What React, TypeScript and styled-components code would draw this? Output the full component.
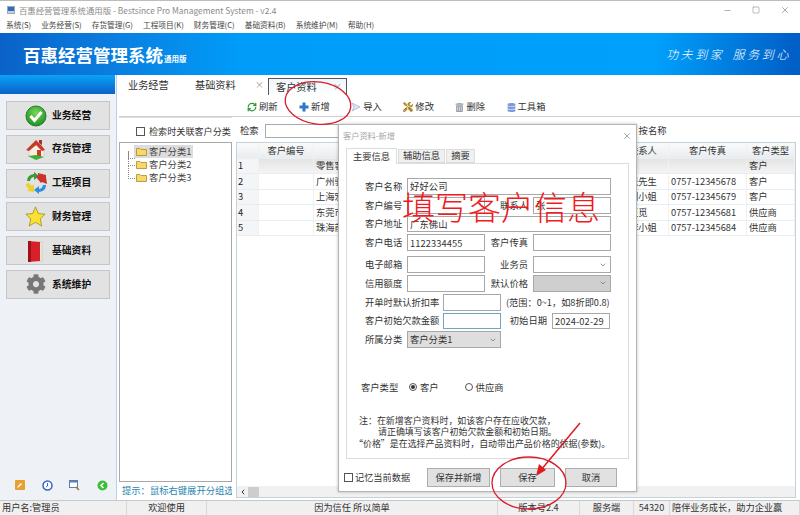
import React from "react";
import styled, { createGlobalStyle } from "styled-components";
import { ChevronDown, Minus, Square, X, ChevronLeft, RefreshCw } from "lucide-react";
import { FaCog, FaTrashAlt, FaDatabase, FaTools } from "react-icons/fa";

const Global = createGlobalStyle`
  html, body { margin: 0; padding: 0; background: #fff; }
  * { box-sizing: border-box; }
  body { font-family: "Noto Sans CJK SC", "Noto Sans", sans-serif; font-size: 9.3px; color: #333; line-height: 1.2; }
`;

const Win = styled.div`
  position: relative; width: 800px; height: 515px; overflow: hidden; background: #fff;
  border-top: 1px solid #bcbcbc; display: flex; flex-direction: column;
`;
const TitleBar = styled.div`
  height: 16px; flex: none; display: flex; align-items: center; padding: 2px 0 0 7px; gap: 4px;
  color: #8a8a8a; font-size: 8.4px;
`;
const AppIcon = styled.span`
  width: 8px; height: 8px; flex: none; background: linear-gradient(#2f6db5 65%, #ccd 65%); border: 1px solid #9ab;
`;
const WinControls = styled.div`
  margin-left: auto; display: flex; gap: 20px; padding-right: 10px; color: #9a9a9a; align-items: center;
`;
const MenuBar = styled.div`
  height: 16px; flex: none; display: flex; align-items: center; padding-left: 6px; gap: 10px; font-size: 7.7px; color: #444;
`;
const Header = styled.header`
  height: 42px; flex: none; display: flex; align-items: center; justify-content: space-between;
  padding: 1px 9px 0 23px;
  background: linear-gradient(90deg, #0a62c8 0%, #0a7ee0 14%, #009cf8 30%, #00a0fb 82%, #0060c8 99%);
  color: #fff;
`;
const Logo = styled.div`
  font-size: 17.5px; font-weight: 700; display: flex; align-items: flex-end; line-height: 1;
`;
const LogoSub = styled.span`
  font-size: 7.5px; font-weight: 700; margin: 0 0 1px 1px;
`;
const Slogan = styled.div`
  font-size: 12px; font-style: italic; font-weight: 300; letter-spacing: 2.6px; word-spacing: 3px;
`;
const Body = styled.div`
  flex: 1; min-height: 0; display: flex;
`;
const Sidebar = styled.aside`
  width: 117px; flex: none; display: flex; flex-direction: column; background: #eef2f6;
  border-right: 1px solid #b8d0e8;
`;
const SideTop = styled.div`
  height: 19px; flex: none; background: linear-gradient(#0aa2f8, #0a62c8); margin-right: 1px;
`;
const SideList = styled.nav`
  display: flex; flex-direction: column; gap: 4.8px; padding: 7px 6px 0; flex: 1;
`;
const SideButton = styled.div`
  height: 29px; background: #e2e2e2; border: 1px solid #c6c6c6; display: flex; align-items: center;
  color: #111; font-weight: 700; font-size: 9.8px; gap: 0;
`;
const SideIcon = styled.span`
  width: 45px; flex: none; display: flex; justify-content: center; padding-left: 12px;
`;
const SideTools = styled.div`
  height: 20px; flex: none; display: flex; align-items: flex-start; gap: 16.5px; padding: 0 0 0 15px;
`;
const Main = styled.main`
  flex: 1; min-width: 0; display: flex; flex-direction: column;
`;
const TabBar = styled.div`
  height: 20px; flex: none; display: flex; align-items: flex-end; font-size: 10.2px; padding-left: 11px;
  color: #333;
`;
const PageTab = styled.div<{ $active?: boolean; $w: number }>`
  width: ${(p) => p.$w}px; height: ${(p) => (p.$active ? "17px" : "19px")}; display: flex; align-items: center;
  padding-left: ${(p) => (p.$active ? "7px" : "0")}; justify-content: space-between;
  border: ${(p) => (p.$active ? "1px solid #555" : "none")}; border-bottom: none;
  background: ${(p) => (p.$active ? "linear-gradient(#eef6fc, #fff)" : "transparent")};
`;
const TabClose = styled.span`
  color: #999; font-size: 9px; margin-right: 4px;
`;
const Toolbar = styled.div`
  height: 22px; flex: none; display: flex; align-items: center; padding: 3px 0 0 128px; gap: 21.5px;
  border-bottom: 1px solid #cfcfcf; margin-left: 2px;
`;
const ToolItem = styled.div`
  display: flex; align-items: center; gap: 2px; color: #333; font-size: 9.3px;
`;
const Content = styled.div`
  flex: 1; min-height: 0; display: flex; gap: 4px; padding-left: 2px;
`;
const LeftCol = styled.div`
  width: 113px; flex: none; display: flex; flex-direction: column;
`;
const CheckRow = styled.label`
  height: 25px; flex: none; display: flex; align-items: center; gap: 4px; padding: 2px 0 0 17px; white-space: nowrap;
  border-top: 1px solid #ddd; font-size: 9.1px;
`;
const Check = styled.span`
  width: 9px; height: 9px; flex: none; border: 1px solid #555; background: #fff;
`;
const TreePanel = styled.div`
  flex: 1; border: 1px solid #a8a8a8; padding: 2px 0 0 8px;
`;
const TreeItem = styled.div<{ $sel?: boolean; $last?: boolean }>`
  position: relative; height: 13px; display: flex; align-items: center; gap: 2px; margin-left: 6px; width: 59px; padding-left: 2px;
  background: ${(p) => (p.$sel ? "#dcdcdc" : "transparent")}; color: #444;
  &::before {
    content: ""; position: absolute; left: -6px; top: ${(p) => (p.$sel ? "6px" : "-6px")}; width: 6px;
    height: ${(p) => (p.$sel ? "7px" : "13px")}; border-left: 1px dotted #888; border-bottom: 1px dotted #888;
  }
`;
const Hint = styled.div`
  height: 18px; flex: none; display: flex; align-items: center; padding-left: 3px; color: #2a86b0; font-size: 9.3px;
  white-space: nowrap; overflow: hidden;
`;
const RightCol = styled.div`
  flex: 1; min-width: 0; display: flex; flex-direction: column;
`;
const SearchRow = styled.div`
  height: 25px; flex: none; display: flex; align-items: center; padding: 2px 0 0 4px; font-size: 9.3px; color: #333;
`;
const SearchInput = styled.input`
  width: 140px; height: 14px; margin-left: 6px; border: 1px solid #aaa; background: #fff; padding: 0;
`;
const SearchRadio = styled.span`
  margin-left: 234px;
`;
const GridPanel = styled.div`
  flex: 1; min-height: 0; width: 560px; margin-bottom: 2px; border: 1px solid #c4d2dc;
  display: flex; flex-direction: column; background: #fff;
`;
const GridBody = styled.div`
  flex: 1; min-height: 0;
`;
const GridRow = styled.div<{ $head?: boolean; $sel?: boolean }>`
  display: grid; grid-template-columns: 22px 55px 315px 40px 78px 48px;
  height: ${(p) => (p.$head ? "15.5px" : "15.5px")}; align-items: center;
  background: ${(p) => (p.$head ? "linear-gradient(#fafafa,#e9edf0)" : p.$sel ? "linear-gradient(#e4e4e4,#f4f4f4)" : "#fff")};
  border-bottom: 1px solid #e9eef0;
`;
const Cell = styled.div<{ $center?: boolean; $pad?: number }>`
  height: 100%; display: flex; align-items: center; white-space: nowrap; overflow: hidden;
  justify-content: ${(p) => (p.$center ? "center" : "flex-start")};
  padding-left: ${(p) => p.$pad ?? 0}px; border-right: 1px solid #eef1f3; color: #333;
`;
const RowHead = styled(Cell)`
  background: #f4f5f6; padding-left: 1px; color: #222;
`;
const ScrollTrack = styled.div`
  height: 11px; flex: none; display: flex; align-items: center; background: #f1f1f1; padding-left: 2px; color: #333;
`;
const ScrollThumb = styled.span`
  width: 11px; height: 10px; background: #cdcdcd; margin-left: 1px;
`;
const StatusBar = styled.footer`
  height: 15px; flex: none; display: flex; background: #f0f0f0; border-top: 1px solid #c8c8c8; color: #333; font-size: 9.2px;
`;
const StatusCell = styled.div<{ $w: number; $left?: boolean }>`
  width: ${(p) => p.$w}px; flex: none; display: flex; align-items: center; white-space: nowrap; overflow: hidden;
  justify-content: ${(p) => (p.$left ? "flex-start" : "center")}; padding-left: ${(p) => (p.$left ? "2px" : "0")};
  border-right: 1px solid #d8d8d8;
`;

/* dialog lies over the page */
const Dialog = styled.section`
  position: absolute; left: 338px; top: 123px; width: 299px; height: 368px; background: #fff;
  border: 1px solid #b4b4b4; box-shadow: 0 0 3px rgba(0,0,0,.25); display: flex; flex-direction: column; padding: 0 7px;
`;
const DialogTitle = styled.div`
  height: 22px; flex: none; margin: 0 -5px; padding: 0 2px; display: flex; align-items: center; justify-content: space-between;
  color: #a8a8a8; font-size: 8.2px;
`;
const DialogTabs = styled.div`
  height: 16px; flex: none; display: flex; gap: 1px; align-items: flex-end; font-size: 9.3px; color: #333; position: relative; z-index: 1;
`;
const DialogTab = styled.div<{ $active?: boolean; $w: number }>`
  width: ${(p) => p.$w}px; height: ${(p) => (p.$active ? "16px" : "14px")}; display: flex; align-items: center; justify-content: center;
  background: ${(p) => (p.$active ? "#fff" : "#f0f0f0")}; border: 1px solid #dcdcdc;
  border-bottom: ${(p) => (p.$active ? "none" : "1px solid #dcdcdc")};
  margin-bottom: ${(p) => (p.$active ? "-1px" : "0")};
`;
const TabBody = styled.div`
  height: 296px; flex: none; border: 1px solid #dcdcdc; padding: 14px 0 0 18px; display: flex; flex-direction: column; gap: 2px;
`;
const FormRow = styled.div<{ $mt?: number }>`
  height: 16.8px; flex: none; display: flex; align-items: center; margin-top: ${(p) => p.$mt ?? 0}px;
`;
const FieldLabel = styled.label<{ $w: number; $right?: boolean }>`
  width: ${(p) => p.$w}px; flex: none; white-space: nowrap; text-align: ${(p) => (p.$right ? "right" : "left")}; color: #333;
`;
const Field = styled.input<{ $w: number; $focus?: boolean; $ml?: number }>`
  width: ${(p) => p.$w}px; height: 100%; flex: none; padding: 0 0 0 2px; margin-left: ${(p) => p.$ml ?? 5}px;
  border: 1px solid ${(p) => (p.$focus ? "#6fa6c8" : "#a8a8a8")}; background: #fff; outline: none;
  font: inherit; color: #333; letter-spacing: .1px;
`;
const SelectBox = styled.div<{ $w: number; $bg?: string; $ml?: number }>`
  width: ${(p) => p.$w}px; height: 100%; flex: none; display: flex; align-items: center; justify-content: space-between;
  padding: 0 3px 0 2px; margin-left: ${(p) => p.$ml ?? 5}px; border: 1px solid #a8a8a8; background: ${(p) => p.$bg ?? "#fff"}; color: #333;
`;
const RangeNote = styled.span`
  margin-left: 5px; white-space: nowrap; font-size: 9.2px;
`;
const TypeRow = styled.div`
  margin-top: 30px; height: 14px; display: flex; align-items: center; margin-left: -4px; flex: none;
`;
const Radio = styled.span<{ $on?: boolean }>`
  width: 8px; height: 8px; flex: none; border-radius: 50%; border: 1px solid #555; background: #fff; position: relative;
  margin-right: 3px; margin-left: 10px;
  &::after { content: ""; display: ${(p) => (p.$on ? "block" : "none")}; position: absolute; inset: 1px; background: #333; border-radius: 50%; }
`;
const RadioGap = styled.span`
  width: 16px;
`;
const Notes = styled.div`
  margin: 19px 0 0 -11px; font-size: 8.95px; line-height: 11.2px; white-space: nowrap; color: #333;
`;
const NoteLine = styled.div<{ $ind: number }>`
  padding-left: ${(p) => p.$ind}px;
`;
const DialogFooter = styled.div`
  flex: 1; display: flex; align-items: center; padding-top: 5px; margin-left: -2px;
`;
const RememberLabel = styled.label`
  display: flex; align-items: center; gap: 2px; width: 83px; flex: none; font-size: 9.2px; white-space: nowrap;
`;
const FootButton = styled.button<{ $w: number; $ml?: number }>`
  width: ${(p) => p.$w}px; height: 19px; flex: none; margin-left: ${(p) => p.$ml ?? 0}px; background: #e1e1e1; border: 1px solid #adadad;
  font: inherit; font-size: 9.2px; color: #333; padding: 0;
`;
const Marks = styled.svg`
  position: absolute; inset: 0; width: 800px; height: 515px; pointer-events: none;
`;
const Annotation = styled.div`
  position: absolute; left: 402px; top: 186px; font-size: 33px; line-height: 38px; font-weight: 300; color: #f01a20; white-space: nowrap;
  font-family: "Noto Sans CJK SC", sans-serif;
`;

const CheckIcon = () => (
  <svg width="22" height="22" viewBox="0 0 22 22"><defs><radialGradient id="g1" cx=".5" cy=".35" r=".7"><stop offset="0" stopColor="#7ad85a" /><stop offset="1" stopColor="#148a20" /></radialGradient></defs><circle cx="11" cy="11" r="10" fill="url(#g1)" stroke="#2a7a2a" /><path d="M5.5 11l4 4.5 7-8.5" fill="none" stroke="#fff" strokeWidth="3" /></svg>
);
const HouseIcon = () => (
  <svg width="22" height="22" viewBox="0 0 22 22"><path d="M4 11l8-4 7 4v7l-8 3-7-3z" fill="#f4f0e2" stroke="#bbb" strokeWidth=".5" /><path d="M1 12L11 2l5 5 4 5-3 1-6-6-7 6z" fill="#c83a28" /><path d="M14 2h3v5l-3-2z" fill="#a83020" /><rect x="12" y="12" width="4" height="7" fill="#d03a28" /><path d="M3 18l8 4 8-3-8-2z" fill="#3fae3a" /></svg>
);
const ArrowsIcon = () => (
  <svg width="22" height="22" viewBox="0 0 22 22"><path d="M2 9q0-6 7-7V0l5 4-5 4V5q-3 0-4 4z" fill="#3a9a38" /><path d="M13 1l8 2v2l1 7-5-2-1 1-5-6 2-1z" fill="#c8342c" /><path d="M21 13q0 6-7 7v2l-5-4 5-4v3q3 0 4-4z" fill="#2b8fe0" /><path d="M1 12l3-1 3 3 2-2v8l-7-1 2-2-3-3z" fill="#f0d030" /></svg>
);
const StarIcon = () => (
  <svg width="21" height="21" viewBox="0 0 22 22"><polygon points="11,1 14,8 21,8.5 16,13.5 17.5,21 11,17 4.5,21 6,13.5 1,8.5 8,8" fill="#fbe232" stroke="#9a8a10" strokeWidth=".8" /></svg>
);
const BookIcon = () => (
  <svg width="20" height="22" viewBox="0 0 20 22"><rect x="11" y="2" width="5" height="19" fill="#eec" stroke="#bbb" strokeWidth=".5" /><path d="M2 1l12 1v19L2 22z" fill="#d8202a" /><path d="M2 1h3v21H2z" fill="#a01018" /></svg>
);
const FolderIcon = () => (
  <svg width="11" height="9" viewBox="0 0 11 9"><path d="M.5 1.5h3.5l1 1h5.500v6H.5z" fill="#f8d868" stroke="#a88a28" strokeWidth=".8" /></svg>
);
const PlusIcon = () => (
  <svg width="10" height="10" viewBox="0 0 10 10"><path d="M3.500 .5h3v3h3v3h-3v3h-3v-3h-3v-3h3z" fill="#2f78c8" /></svg>
);
const ImportIcon = () => (
  <svg width="10" height="10" viewBox="0 0 10 10"><path d="M1 1l8 4-8 4 2-4z" fill="#dfe6f6" stroke="#a8b4d8" strokeWidth=".8" /></svg>
);
const EditBadge = () => (
  <svg width="10" height="10" viewBox="0 0 10 10"><rect width="10" height="10" rx="1" fill="#e8a030" /><path d="M2 8l1-2 3-3 1 1-3 3z" fill="#fff" /></svg>
);
const ClockIcon = () => (
  <svg width="11" height="11" viewBox="0 0 11 11"><circle cx="5.500" cy="5.500" r="4.500" fill="#fff" stroke="#3a62c8" strokeWidth="1.500" /><path d="M5.500 3v3l-1.500 1" stroke="#3a62c8" fill="none" /></svg>
);
const FindIcon = () => (
  <svg width="11" height="11" viewBox="0 0 11 11"><rect x=".5" y=".5" width="8" height="7" fill="#fff" stroke="#5a80b8" /><rect x=".5" y=".5" width="8" height="2" fill="#5a80b8" /><path d="M7 7l3 3" stroke="#a07030" strokeWidth="1.500" /></svg>
);
const BackIcon = () => (
  <svg width="11" height="11" viewBox="0 0 11 11"><circle cx="5.500" cy="5.500" r="5" fill="#38c038" /><path d="M6.500 3L4 5.500 6.500 8" stroke="#fff" strokeWidth="1.600" fill="none" /></svg>
);

const sideItems: [React.ReactNode, string][] = [
  [<CheckIcon />, "业务经营"],
  [<HouseIcon />, "存货管理"],
  [<ArrowsIcon />, "工程项目"],
  [<StarIcon />, "财务管理"],
  [<BookIcon />, "基础资料"],
  [<FaCog size={20} color="#777" />, "系统维护"],
];
const menus = ["系统(S)", "业务经营(S)", "存货管理(G)", "工程项目(K)", "财务管理(C)", "基础资料(B)", "系统维护(M)", "帮助(H)"];
const rows = [
  ["1", "零售客户", "", "", "客户"],
  ["2", "广州骥达贸易有限公司", "张先生", "0757-12345678", "客户"],
  ["3", "上海宏远实业有限公司", "刘小姐", "0757-12345679", "客户"],
  ["4", "东莞市华盛有限公司", "王觅", "0757-12345681", "供应商"],
  ["5", "珠海前景电子有限公司", "李小姐", "0757-12345684", "供应商"],
];

export default function App() {
  return (
    <Win>
      <Global />
      <TitleBar>
        <AppIcon />
        百惠经营管理系统通用版 - Bestsince Pro Management System - v2.4
        <WinControls>
          <Minus size={9} />
          <Square size={8} />
          <X size={10} />
        </WinControls>
      </TitleBar>
      <MenuBar>
        {menus.map((m) => (
          <span key={m}>{m}</span>
        ))}
      </MenuBar>
      <Header>
        <Logo>
          百惠经营管理系统<LogoSub>通用版</LogoSub>
        </Logo>
        <Slogan>功夫到家 服务到心</Slogan>
      </Header>
      <Body>
        <Sidebar>
          <SideTop />
          <SideList>
            {sideItems.map(([icon, label]) => (
              <SideButton key={label}>
                <SideIcon>{icon}</SideIcon>
                {label}
              </SideButton>
            ))}
          </SideList>
          <SideTools>
            <EditBadge />
            <ClockIcon />
            <FindIcon />
            <BackIcon />
          </SideTools>
        </Sidebar>
        <Main>
          <TabBar>
            <PageTab $w={67}>业务经营</PageTab>
            <PageTab $w={73}>
              基础资料<TabClose>×</TabClose>
            </PageTab>
            <PageTab $w={79} $active>
              客户资料<TabClose>×</TabClose>
            </PageTab>
          </TabBar>
          <Toolbar>
            <ToolItem><RefreshCw size={10} color="#2f9a3a" strokeWidth={3} />刷新</ToolItem>
            <ToolItem><PlusIcon />新增</ToolItem>
            <ToolItem><ImportIcon />导入</ToolItem>
            <ToolItem><FaTools size={10} color="#b08a28" />修改</ToolItem>
            <ToolItem><FaTrashAlt size={9} color="#9aa0a8" />删除</ToolItem>
            <ToolItem><FaDatabase size={9} color="#7f9ad8" />工具箱</ToolItem>
          </Toolbar>
          <Content>
            <LeftCol>
              <CheckRow><Check />检索时关联客户分类</CheckRow>
              <TreePanel>
                <TreeItem $sel><FolderIcon />客户分类1</TreeItem>
                <TreeItem><FolderIcon />客户分类2</TreeItem>
                <TreeItem><FolderIcon />客户分类3</TreeItem>
              </TreePanel>
              <Hint>提示：鼠标右键展开分组选项</Hint>
            </LeftCol>
            <RightCol>
              <SearchRow>
                检索
                <SearchInput readOnly />
                <SearchRadio>按名称</SearchRadio>
              </SearchRow>
              <GridPanel>
                <GridBody>
                  <GridRow $head>
                    <Cell />
                    <Cell $center>客户编号</Cell>
                    <Cell $center>客户名称</Cell>
                    <Cell>联系人</Cell>
                    <Cell $center>客户传真</Cell>
                    <Cell $center>客户类型</Cell>
                  </GridRow>
                  {rows.map((r, i) => (
                    <GridRow key={r[0]} $sel={i === 0}>
                      <RowHead>{r[0]}</RowHead>
                      <Cell />
                      <Cell $pad={2}>{r[1]}</Cell>
                      <Cell>{r[2]}</Cell>
                      <Cell $pad={2}>{r[3]}</Cell>
                      <Cell $pad={2}>{r[4]}</Cell>
                    </GridRow>
                  ))}
                </GridBody>
                <ScrollTrack>
                  <ChevronLeft size={8} strokeWidth={3} />
                  <ScrollThumb />
                </ScrollTrack>
              </GridPanel>
            </RightCol>
          </Content>
        </Main>
      </Body>
      <StatusBar>
        <StatusCell $w={127} $left>用户名:管理员</StatusCell>
        <StatusCell $w={80}>欢迎使用</StatusCell>
        <StatusCell $w={291}>因为信任 所以简单</StatusCell>
        <StatusCell $w={82}>版本号2.4</StatusCell>
        <StatusCell $w={54}>服务端</StatusCell>
        <StatusCell $w={36}>54320</StatusCell>
        <StatusCell $w={130} $left>陪伴业务成长，助力企业赢</StatusCell>
      </StatusBar>

      <Dialog>
        <DialogTitle>
          客户资料-新增
          <X size={10} color="#999" />
        </DialogTitle>
        <DialogTabs>
          <DialogTab $w={51} $active>主要信息</DialogTab>
          <DialogTab $w={47}>辅助信息</DialogTab>
          <DialogTab $w={29}>摘要</DialogTab>
        </DialogTabs>
        <TabBody>
          <FormRow>
            <FieldLabel $w={37}>客户名称</FieldLabel>
            <Field $w={204} readOnly value="好好公司" />
          </FormRow>
          <FormRow>
            <FieldLabel $w={37}>客户编号</FieldLabel>
            <Field $w={78} readOnly />
            <FieldLabel $w={43} $right>联系人</FieldLabel>
            <Field $w={78} readOnly value="张" />
          </FormRow>
          <FormRow>
            <FieldLabel $w={37}>客户地址</FieldLabel>
            <Field $w={204} readOnly value="广东佛山" />
          </FormRow>
          <FormRow>
            <FieldLabel $w={37}>客户电话</FieldLabel>
            <Field $w={78} readOnly value="1122334455" />
            <FieldLabel $w={43} $right>客户传真</FieldLabel>
            <Field $w={78} readOnly />
          </FormRow>
          <FormRow $mt={3}>
            <FieldLabel $w={37}>电子邮箱</FieldLabel>
            <Field $w={78} readOnly />
            <FieldLabel $w={43} $right>业务员</FieldLabel>
            <SelectBox $w={78}><span /><ChevronDown size={8} color="#666" /></SelectBox>
          </FormRow>
          <FormRow>
            <FieldLabel $w={37}>信用额度</FieldLabel>
            <Field $w={78} readOnly />
            <FieldLabel $w={43} $right>默认价格</FieldLabel>
            <SelectBox $w={78} $bg="#cfcfcf"><span /><ChevronDown size={8} color="#666" /></SelectBox>
          </FormRow>
          <FormRow>
            <FieldLabel $w={73}>开单时默认折扣率</FieldLabel>
            <Field $w={58} readOnly />
            <RangeNote>(范围：0~1，如8折即0.8)</RangeNote>
          </FormRow>
          <FormRow>
            <FieldLabel $w={73}>客户初始欠款金额</FieldLabel>
            <Field $w={58} $focus readOnly />
            <FieldLabel $w={46} $right>初始日期</FieldLabel>
            <Field $w={58} readOnly value="2024-02-29" />
          </FormRow>
          <FormRow>
            <FieldLabel $w={37}>所属分类</FieldLabel>
            <SelectBox $w={94} $bg="#dedede">客户分类1<ChevronDown size={8} color="#666" /></SelectBox>
          </FormRow>
          <TypeRow>
            <FieldLabel $w={38}>客户类型</FieldLabel>
            <Radio $on />客户
            <RadioGap />
            <Radio />供应商
          </TypeRow>
          <Notes>
            <NoteLine $ind={5}>注：在新增客户资料时，如该客户存在应收欠款，</NoteLine>
            <NoteLine $ind={24}>请正确填写该客户初始欠款金额和初始日期。</NoteLine>
            <NoteLine $ind={0}>“价格”是在选择产品资料时，自动带出产品价格的依据(参数)。</NoteLine>
          </Notes>
        </TabBody>
        <DialogFooter>
          <RememberLabel><Check />记忆当前数据</RememberLabel>
          <FootButton $w={63}>保存并新增</FootButton>
          <FootButton $w={55} $ml={10}>保存</FootButton>
          <FootButton $w={52} $ml={10}>取消</FootButton>
        </DialogFooter>
      </Dialog>

      <Annotation>填写客户信息</Annotation>
      <Marks viewBox="0 0 800 515">
        <ellipse cx="318" cy="102" rx="33" ry="21" fill="none" stroke="#d81e2c" strokeWidth="1.300" transform="rotate(8 318 102)" />
        <ellipse cx="529" cy="482" rx="37" ry="26" fill="none" stroke="#d81e2c" strokeWidth="1.300" />
        <path d="M580 422L541 469" stroke="#e01a22" strokeWidth="1.500" />
        <path d="M536 475l3-12 7 6z" fill="#e01a22" />
      </Marks>
    </Win>
  );
}
